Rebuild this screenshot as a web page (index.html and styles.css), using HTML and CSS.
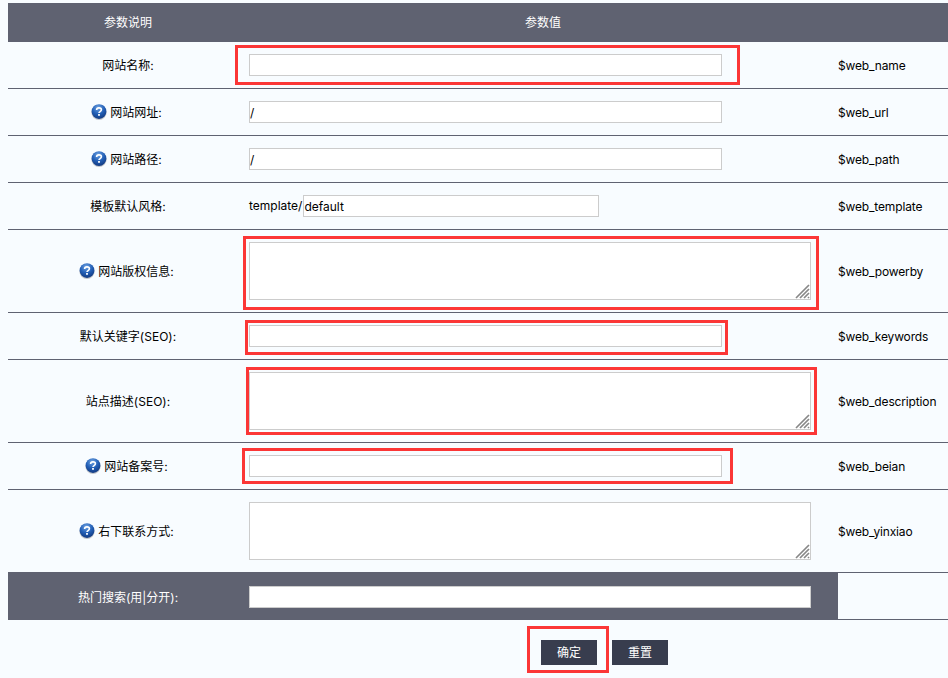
FILE: index.html
```html
<!DOCTYPE html>
<html lang="zh-CN">
<head>
<meta charset="utf-8">
<title>参数设置</title>
<link rel="stylesheet" href="styles.css">
</head>
<body>
<svg class="defs" width="0" height="0" aria-hidden="true">
  <defs>
    <radialGradient id="orb" cx="45%" cy="25%" r="80%">
      <stop offset="0" stop-color="#6fa3e2"/>
      <stop offset="0.5" stop-color="#2461b8"/>
      <stop offset="1" stop-color="#0f3479"/>
    </radialGradient>
    <symbol id="help" viewBox="0 0 16 16">
      <circle cx="8" cy="8.4" r="7.6" fill="#bfc3c9"/>
      <circle cx="8" cy="7.6" r="7.4" fill="url(#orb)"/>
      <path d="M5.6 6c0-1.4 1.1-2.1 2.4-2.1s2.4.7 2.4 1.9c0 1.8-2.4 1.7-2.4 3.3" fill="none" stroke="#fff" stroke-width="1.6"/>
      <rect x="7.1" y="10" width="1.8" height="1.8" fill="#fff"/>
    </symbol>
    <symbol id="grip" viewBox="0 0 15 15">
      <path d="M1 14 14 1M5 14 14 5M9 14 14 9M13 14 14 13" stroke="#888" stroke-width="1.7" fill="none"/>
    </symbol>
  </defs>
</svg>
<main class="page">
  <table class="form">
    <colgroup><col class="c1"><col class="c2"><col class="c3"></colgroup>
    <thead>
      <tr><th>参数说明</th><th>参数值</th><th></th></tr>
    </thead>
    <tbody>
      <tr>
        <td class="name">网站名称:</td>
        <td class="val"><input class="wide" type="text"></td>
        <td class="var">$web_name</td>
      </tr>
      <tr>
        <td class="name has-q"><svg class="q"><use href="#help"/></svg>网站网址:</td>
        <td class="val"><input class="wide" type="text" value="/"></td>
        <td class="var">$web_url</td>
      </tr>
      <tr>
        <td class="name has-q"><svg class="q"><use href="#help"/></svg>网站路径:</td>
        <td class="val"><input class="wide" type="text" value="/"></td>
        <td class="var">$web_path</td>
      </tr>
      <tr>
        <td class="name">模板默认风格:</td>
        <td class="val"><span class="prefix">template/</span><input class="tpl" type="text" value="default"></td>
        <td class="var">$web_template</td>
      </tr>
      <tr class="tall">
        <td class="name has-q"><svg class="q"><use href="#help"/></svg>网站版权信息:</td>
        <td class="val"><div class="area"><textarea></textarea><svg class="grip"><use href="#grip"/></svg></div></td>
        <td class="var">$web_powerby</td>
      </tr>
      <tr>
        <td class="name">默认关键字(SEO):</td>
        <td class="val"><input class="wide" type="text"></td>
        <td class="var">$web_keywords</td>
      </tr>
      <tr class="tall">
        <td class="name">站点描述(SEO):</td>
        <td class="val"><div class="area"><textarea></textarea><svg class="grip"><use href="#grip"/></svg></div></td>
        <td class="var">$web_description</td>
      </tr>
      <tr>
        <td class="name has-q"><svg class="q"><use href="#help"/></svg>网站备案号:</td>
        <td class="val"><input class="wide" type="text"></td>
        <td class="var">$web_beian</td>
      </tr>
      <tr class="tall">
        <td class="name has-q"><svg class="q"><use href="#help"/></svg>右下联系方式:</td>
        <td class="val"><div class="area"><textarea></textarea><svg class="grip"><use href="#grip"/></svg></div></td>
        <td class="var">$web_yinxiao</td>
      </tr>
      <tr class="dark">
        <td class="name">热门搜索(用|分开):</td>
        <td class="val"><input class="full" type="text"></td>
        <td class="var"></td>
      </tr>
    </tbody>
  </table>
  <div class="actions">
    <button type="button" class="btn">确定</button>
    <button type="button" class="btn">重置</button>
  </div>
  <i class="mark m1"></i>
  <i class="mark m2"></i>
  <i class="mark m3"></i>
  <i class="mark m4"></i>
  <i class="mark m5"></i>
  <i class="mark m6"></i>
</main>
</body>
</html>
```
FILE: styles.css
```css
* { box-sizing: border-box; }
html, body { margin: 0; padding: 0; height: 100%; overflow: hidden; }
body {
  background: #f8fcff;
  color: #000;
  font: 12px/1.2 Inter, "Noto Sans CJK SC", sans-serif;
}
.defs { position: absolute; }
.page { position: relative; padding: 3px 0 0 8px; height: 678px; }
.form { border-collapse: separate; border-spacing: 0; table-layout: fixed; width: 940px; }
.c1 { width: 240px; }
.c2 { width: 590px; }
.c3 { width: 110px; }
th {
  height: 39px;
  padding: 1px 0 0;
  background: #5f6271;
  color: #fff;
  font-weight: normal;
  text-align: center;
}
td {
  height: 47px;
  padding: 0;
  border-bottom: 1px solid #5f6271;
  vertical-align: middle;
}
.tall td { height: 83px; }
.name, .var { padding-top: 3px; }
.var { letter-spacing: -0.15px; }
.name.has-q { padding-top: 1px; }
.name { text-align: center; }
.val { padding-left: 1px; }
.q { width: 16px; height: 16px; margin: 0 3px 0 -3px; vertical-align: -3px; }
input, textarea {
  display: block;
  margin: 0;
  padding: 0;
  height: 22px;
  border: 1px solid #cccccc;
  background: #fff;
  color: #000;
  font: inherit;
  outline: none;
  border-radius: 0;
}
.wide { width: 473px; }
.full { width: 562px; }
.tpl { display: inline-block; width: 296px; margin-left: 1px; vertical-align: middle; }
.prefix { vertical-align: middle; }
.area { position: relative; width: 562px; height: 58px; }
textarea { width: 100%; height: 100%; resize: none; }
.grip { position: absolute; right: 1px; bottom: 1px; width: 15px; height: 15px; }
.dark td { height: 47px; background: #5f6271; color: #fff; border-bottom: 0; }
.dark td.var { background: #f8fcff; border-bottom: 1px solid #5f6271; }
.actions { display: flex; gap: 15px; padding: 20px 0 0 533px; }
.btn {
  width: 56px;
  height: 25px;
  padding: 2px 0 0;
  border: 0;
  background: #383d4e;
  color: #fff;
  font: inherit;
}
.mark { position: absolute; border: 3px solid #fb3636; pointer-events: none; }
.m1 { left: 235px; top: 45px; width: 505px; height: 40px; }
.m2 { left: 243px; top: 236px; width: 576px; height: 74px; }
.m3 { left: 245px; top: 320px; width: 483px; height: 35px; }
.m4 { left: 246px; top: 367px; width: 571px; height: 68px; }
.m5 { left: 242px; top: 448px; width: 491px; height: 36px; }
.m6 { left: 527px; top: 626px; width: 82px; height: 47px; }
```
